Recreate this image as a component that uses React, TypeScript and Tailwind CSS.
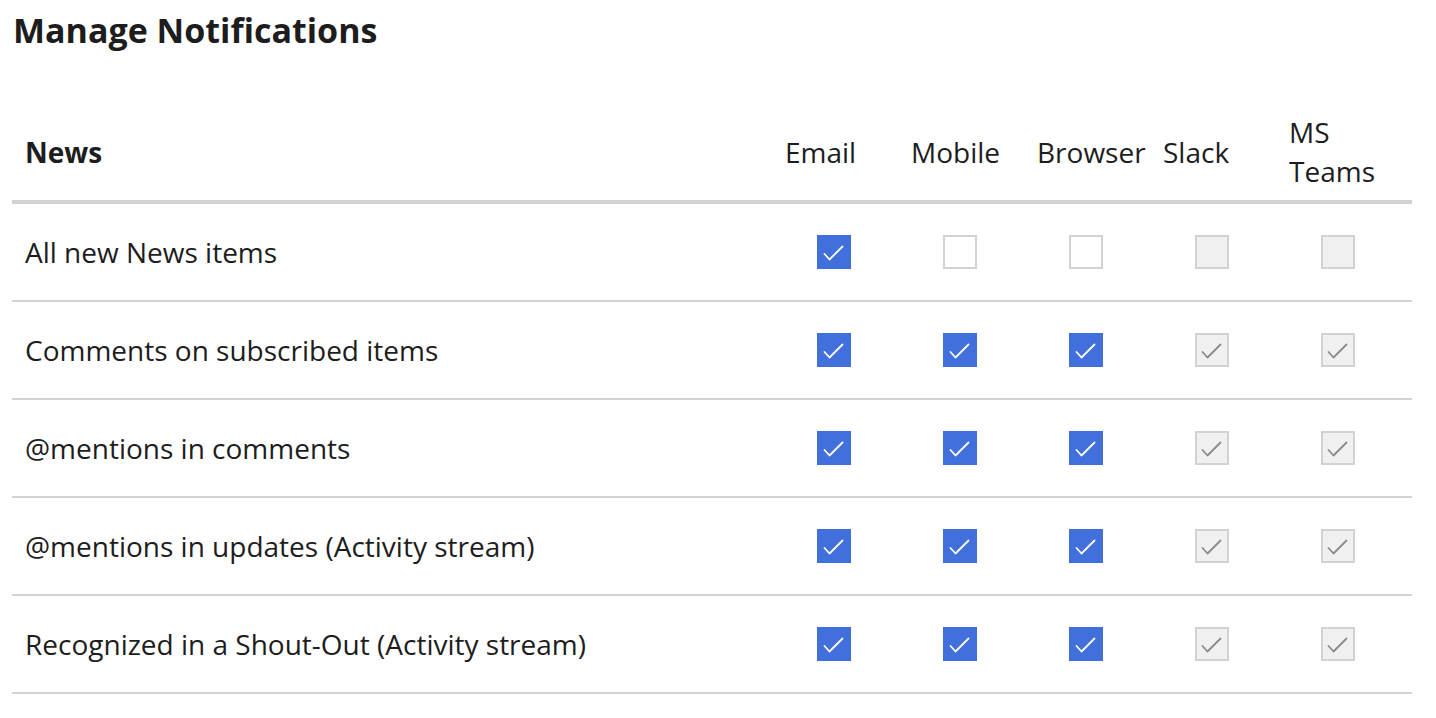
type Cell = 'on' | 'off' | 'disabled' | 'disabledOn'

interface Row {
  label: string
  cells: Cell[]
}

const channels = ['Email', 'Mobile', 'Browser', 'Slack', 'MS Teams']

const rows: Row[] = [
  { label: 'All new News items', cells: ['on', 'off', 'off', 'disabled', 'disabled'] },
  { label: 'Comments on subscribed items', cells: ['on', 'on', 'on', 'disabledOn', 'disabledOn'] },
  { label: '@mentions in comments', cells: ['on', 'on', 'on', 'disabledOn', 'disabledOn'] },
  { label: '@mentions in updates (Activity stream)', cells: ['on', 'on', 'on', 'disabledOn', 'disabledOn'] },
  { label: 'Recognized in a Shout-Out (Activity stream)', cells: ['on', 'on', 'on', 'disabledOn', 'disabledOn'] },
]

function CheckMark({ color }: { color: string }) {
  return (
    <svg width="34" height="34" viewBox="0 0 34 34" fill="none">
      <path
        d="M7.5 19 L12.5 24.5 L25.5 11.5"
        stroke={color}
        strokeWidth="1.8"
        strokeLinecap="round"
        strokeLinejoin="round"
      />
    </svg>
  )
}

function Box({ state }: { state: Cell }) {
  if (state === 'on') {
    return (
      <div className="flex h-[34px] w-[34px] items-center justify-center bg-[#416fdc]">
        <CheckMark color="#ffffff" />
      </div>
    )
  }
  if (state === 'off') {
    return <div className="h-[34px] w-[34px] border-2 border-[#d2d2d2] bg-white" />
  }
  return (
    <div className="relative h-[34px] w-[34px] border-2 border-[#d2d2d2] bg-[#f0f0f0]">
      {state === 'disabledOn' && (
        <div className="absolute -left-[2px] -top-[2px]">
          <CheckMark color="#8a8a8a" />
        </div>
      )}
    </div>
  )
}

export default function App() {
  return (
    <div
      className="min-h-screen bg-white px-3 pt-[6px] text-[#1d1d1d]"
      style={{ fontFamily: '"Open Sans", "Noto Sans", sans-serif' }}
    >
      <h1 className="pl-px text-[34px] font-bold leading-[48px]">Manage Notifications</h1>

      <div className="mt-[49px] w-[1400px]">
        <div className="flex items-center border-b-4 border-[#d2d2d2] pb-[9px] pt-[10px]">
          <div className="w-[773px] pl-[13px] text-[28px] font-bold leading-[39px]">News</div>
          {channels.map((c) => (
            <div key={c} className="w-[126px] text-[28px] leading-[39px] last:w-[123px]">
              {c === 'MS Teams' ? (
                <>
                  MS
                  <br />
                  Teams
                </>
              ) : (
                c
              )}
            </div>
          ))}
        </div>

        {rows.map((r) => (
          <div key={r.label} className="flex h-[98px] items-center border-b-2 border-[#d2d2d2]">
            <div className="w-[773px] pl-[13px] text-[28px] leading-[39px]">{r.label}</div>
            {r.cells.map((s, i) => (
              <div key={i} className="w-[126px] pl-[32px] last:w-[123px]">
                <Box state={s} />
              </div>
            ))}
          </div>
        ))}
      </div>
    </div>
  )
}
